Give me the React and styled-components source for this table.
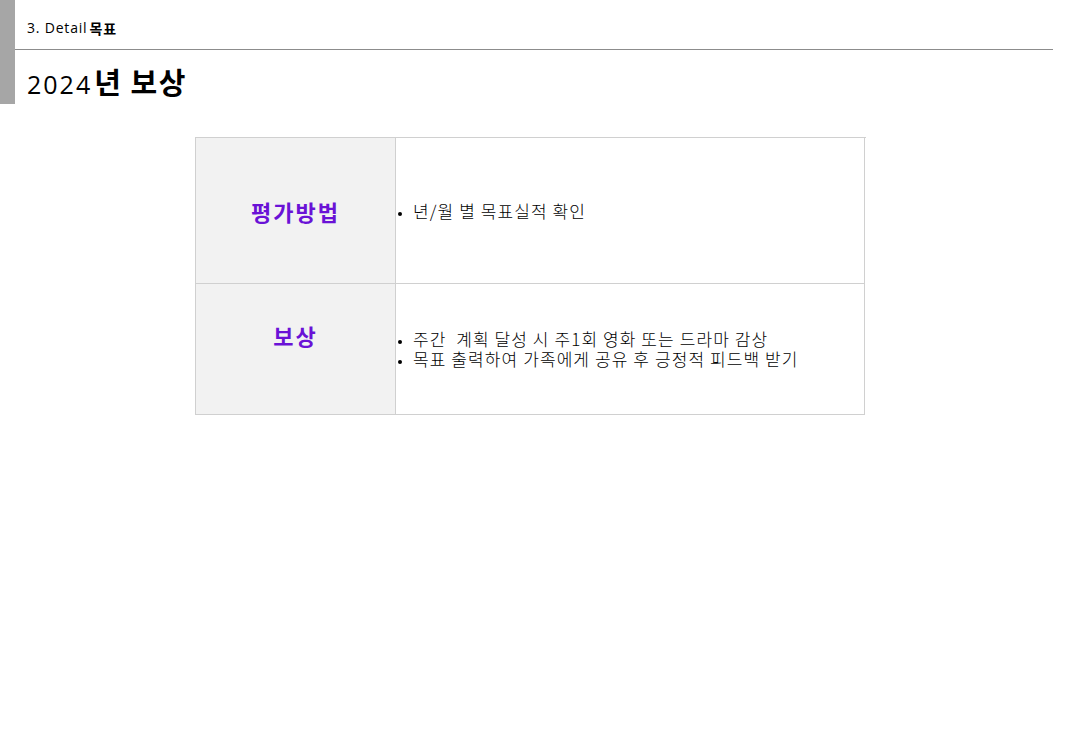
import React from 'react'
import styled, { createGlobalStyle } from 'styled-components'

const GlobalStyle = createGlobalStyle`
  html, body { margin: 0; padding: 0; background: #fff; }
  body { font-family: "Noto Sans CJK KR", "Noto Sans", sans-serif; color: #000; }
`

const rows = [
  { label: '평가방법', items: ['년/월 별 목표실적 확인'], labelShift: 0 },
  { label: '보상', items: ['주간  계획 달성 시 주1회 영화 또는 드라마 감상', '목표 출력하여 가족에게 공유 후 긍정적 피드백 받기'], labelShift: -14 },
]

const App = () => {
  return (
    <Page>
      <GlobalStyle />
      <Header>
        <SideBar />
        <HeadText>
          <Section>
            <Small>3. Detail</Small><strong>목표</strong>
          </Section>
          <Rule />
          <Title>
            <Num>2024</Num><strong>년 보상</strong>
          </Title>
        </HeadText>
      </Header>
      <Table>
        {rows.map((row, i) => (
          <React.Fragment key={i}>
            <LabelCell shift={row.labelShift}>{row.label}</LabelCell>
            <BodyCell tall={i === 0}>
              <List>
                {row.items.map((t, j) => <li key={j}>{t}</li>)}
              </List>
            </BodyCell>
          </React.Fragment>
        ))}
      </Table>
    </Page>
  )
}

const Page = styled.div`
  width: 1067px;
  height: 754px;
`

const Header = styled.div`
  display: flex;
  height: 104px;
`

const SideBar = styled.div`
  width: 15px;
  background: #a6a6a6;
`

const HeadText = styled.div`
  flex: 1;
  display: flex;
  flex-direction: column;
  padding-right: 14px;
`

const Section = styled.div`
  height: 49px;
  display: flex;
  align-items: flex-end;
  padding-left: 12px;
  padding-bottom: 14px;
  box-sizing: border-box;
  font-size: 14px;
  line-height: 1;
  strong { font-weight: 700; letter-spacing: 1px; margin-left: 2px; }
`

const Small = styled.span`
  font-family: "Open Sans", sans-serif;
  font-size: 14px;
  letter-spacing: 0.8px;
`

const Rule = styled.div`
  height: 1px;
  background: #8c8c8c;
`

const Title = styled.div`
  padding-left: 12px;
  padding-top: 16px;
  display: flex;
  align-items: baseline;
  font-size: 29px;
  line-height: 1.1;
  strong { font-weight: 700; letter-spacing: 1.5px; margin-left: 2px; }
`

const Num = styled.span`
  font-family: "Open Sans", sans-serif;
  font-size: 25px;
  letter-spacing: 2px;
`

const Table = styled.div`
  display: grid;
  grid-template-columns: 200px 469px;
  width: 670px;
  margin: 33px 0 0 195px;
  border-top: 1px solid #d0d0d0;
  border-left: 1px solid #d0d0d0;
`

const LabelCell = styled.div`
  background: #f2f2f2;
  border-right: 1px solid #d0d0d0;
  border-bottom: 1px solid #d0d0d0;
  display: flex;
  align-items: center;
  justify-content: center;
  color: #6a12d6;
  font-size: 22px;
  font-weight: 700;
  letter-spacing: 2px;
  padding-bottom: ${(p) => -p.shift * 2}px;
`

const BodyCell = styled.div`
  height: ${(p) => (p.tall ? '145px' : '130px')};
  border-right: 1px solid #d0d0d0;
  border-bottom: 1px solid #d0d0d0;
  display: flex;
  align-items: center;
  font-size: 17px;
  font-weight: 300;
  letter-spacing: 1.1px;
  white-space: pre;
`

const List = styled.ul`
  margin: 0;
  padding: 0 0 0 17px;
  line-height: 20px;
  li { padding-left: 0; }
  li::marker { font-size: 11px; }
`

export default App
